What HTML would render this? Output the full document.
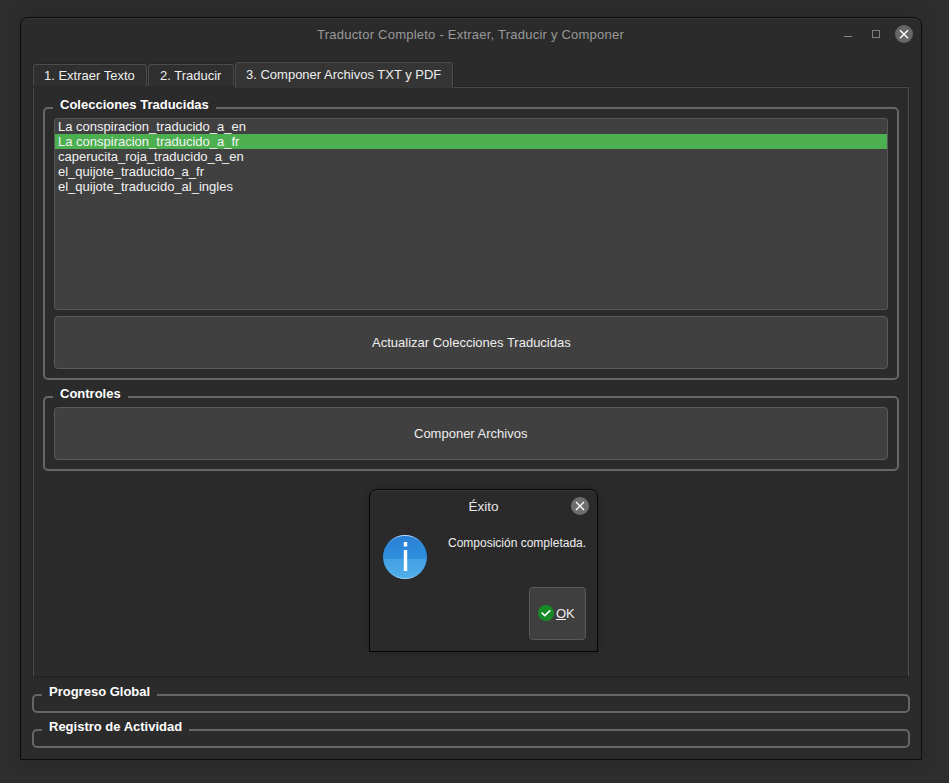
<!DOCTYPE html>
<html><head><meta charset="utf-8">
<style>
*{margin:0;padding:0;box-sizing:border-box}
html,body{width:949px;height:783px;overflow:hidden;background:#2d2d2d;font-family:"Liberation Sans",sans-serif;font-size:13px;color:#eeeeee}
.a{position:absolute}
.t{position:absolute;white-space:nowrap;line-height:13px}
#win{left:20px;top:17px;width:902px;height:743px;background:#2b2b2b;border:1px solid #0c0c0c;border-radius:8px 8px 0 0;box-shadow:inset 0 1px 0 #363636,0 0 14px rgba(0,0,0,0.12)}
.tab{position:absolute;background:#2f2f2f;border:1px solid #4c4c4c;border-bottom:none;border-radius:3px 3px 0 0;box-shadow:0 -1px 0 #262626,-1px 0 0 #262626,1px 0 0 #262626}
.tab.sel{background:#353535}
.grp{position:absolute;border:2px solid #666666;border-radius:5px}
.gt{position:absolute;white-space:nowrap;line-height:13px;font-weight:bold;color:#ffffff;background:#2b2b2b;padding:0 7px 0 7px}
.list{left:54px;top:118px;width:834px;height:192px;background:#404040;border:1px solid #585858;border-radius:3px}
.btn{position:absolute;background:#404040;border:1px solid #5a5a5a;border-radius:4px}
.item{position:absolute;left:58px;white-space:nowrap;line-height:13px;color:#f2f2f2}
</style></head><body>
<div class="a" id="win"></div>
<div class="t" style="left:317px;top:28px;color:#999999;letter-spacing:0.23px">Traductor Completo - Extraer, Traducir y Componer</div>
<!-- title buttons -->
<div class="a" style="left:844px;top:36px;width:8px;height:1px;background:#8a8a8a"></div>
<div class="a" style="left:872px;top:30px;width:8px;height:8px;border:1px solid #7d7d7d"></div>
<div class="a" style="left:895px;top:25px;width:18px;height:18px;border-radius:50%;background:#676767"></div>
<svg class="a" style="left:895px;top:25px" width="18" height="18"><path d="M5 5.3L13 13.3M13 5.3L5 13.3" stroke="#ffffff" stroke-width="1.4"/></svg>

<!-- tabs -->
<div class="a" style="left:32px;top:88px;width:878px;height:590px;border:1px solid #262626;border-top:none"></div>
<div class="a" style="left:33px;top:88px;width:876px;height:589px;border:1px solid #4c4c4c;border-top:none;border-bottom-color:#232323"></div>
<div class="a" style="left:453px;top:86px;width:457px;height:1px;background:#242424"></div>
<div class="a" style="left:453px;top:87px;width:456px;height:1px;background:#4a4a4a"></div>
<div class="tab" style="left:33px;top:64px;width:114px;height:22px"></div>
<div class="tab" style="left:148px;top:64px;width:86px;height:22px"></div>
<div class="tab sel" style="left:235px;top:62px;width:218px;height:26px"></div>
<div class="t" style="left:44px;top:69px">1. Extraer Texto</div>
<div class="t" style="left:160px;top:69px">2. Traducir</div>
<div class="t" style="left:246px;top:68px">3. Componer Archivos TXT y PDF</div>

<!-- group 1 -->
<div class="grp" style="left:43px;top:107px;width:856px;height:273px"></div>
<div class="gt" style="left:53px;top:98px">Colecciones Traducidas</div>
<div class="a list"></div>
<div class="a" style="left:55px;top:134px;width:832px;height:15px;background:#4caf50"></div>
<div class="item" style="top:120px">La conspiracion_traducido_a_en</div>
<div class="item" style="top:135px">La conspiracion_traducido_a_fr</div>
<div class="item" style="top:150px">caperucita_roja_traducido_a_en</div>
<div class="item" style="top:165px">el_quijote_traducido_a_fr</div>
<div class="item" style="top:180px">el_quijote_traducido_al_ingles</div>
<div class="btn" style="left:54px;top:316px;width:834px;height:53px"></div>
<div class="t" style="left:372px;top:336px">Actualizar Colecciones Traducidas</div>

<!-- group 2 -->
<div class="grp" style="left:43px;top:396px;width:856px;height:75px"></div>
<div class="gt" style="left:53px;top:387px">Controles</div>
<div class="btn" style="left:54px;top:407px;width:834px;height:53px"></div>
<div class="t" style="left:414px;top:427px">Componer Archivos</div>

<!-- bottom groups -->
<div class="grp" style="left:32px;top:694px;width:878px;height:19px"></div>
<div class="gt" style="left:42px;top:685px">Progreso Global</div>
<div class="grp" style="left:32px;top:729px;width:878px;height:19px"></div>
<div class="gt" style="left:42px;top:720px">Registro de Actividad</div>

<!-- dialog -->
<div class="a" style="left:369px;top:489px;width:229px;height:163px;background:#2a2a2a;border:1px solid #050505;border-radius:8px 8px 0 0;box-shadow:inset 0 1px 0 #383838,0 0 10px rgba(0,0,0,0.25)"></div>
<div class="t" style="left:468.5px;top:500px;font-size:13.5px;line-height:14px;color:#e6e6e6">Éxito</div>
<div class="a" style="left:571px;top:497px;width:18px;height:18px;border-radius:50%;background:#6e6e6e"></div>
<svg class="a" style="left:571px;top:497px" width="18" height="18"><path d="M5 5L13 13M13 5L5 13" stroke="#ffffff" stroke-width="1.4"/></svg>
<svg class="a" style="left:382px;top:534px" width="46" height="46" viewBox="0 0 46 46">
<defs><clipPath id="c"><circle cx="23" cy="23" r="22"/></clipPath>
<linearGradient id="g1" x1="0" y1="0" x2="0" y2="1"><stop offset="0" stop-color="#2a7fd5"/><stop offset="1" stop-color="#2f90dd"/></linearGradient>
<linearGradient id="g2" x1="0" y1="0" x2="0" y2="1"><stop offset="0" stop-color="#449fe2"/><stop offset="1" stop-color="#52b1ea"/></linearGradient>
<linearGradient id="rim" x1="0" y1="0" x2="0" y2="1"><stop offset="0" stop-color="#cfe6f8"/><stop offset="0.25" stop-color="#5aa8e8" stop-opacity="0"/><stop offset="0.75" stop-color="#5aa8e8" stop-opacity="0"/><stop offset="1" stop-color="#a8d8f6"/></linearGradient>
</defs>
<circle cx="23" cy="23" r="22.6" fill="#1d2b38"/>
<g clip-path="url(#c)"><rect x="0" y="0" width="46" height="25" fill="url(#g1)"/><rect x="0" y="25" width="46" height="21" fill="url(#g2)"/></g>
<circle cx="23" cy="23" r="21.6" fill="none" stroke="url(#rim)" stroke-width="0.9"/>
<rect x="21.8" y="8" width="3.4" height="4.5" fill="#ffffff"/>
<rect x="21.8" y="16" width="3.4" height="21" fill="#ffffff"/>
</svg>
<div class="t" style="left:448px;top:537px;font-size:12px;line-height:12px;color:#eeeeee">Composición completada.</div>
<div class="btn" style="left:529px;top:587px;width:57px;height:53px;background:#3f3f3f"></div>
<svg class="a" style="left:538px;top:605px" width="16" height="16"><circle cx="8" cy="8" r="8" fill="#168a26"/><path d="M3.6 7.7L6.8 10.6L12.3 5.4" stroke="#fff" stroke-width="1.6" fill="none"/></svg>
<div class="t" style="left:556px;top:607px;color:#f0f0f0">OK</div>
<div class="a" style="left:556px;top:619px;width:10px;height:1px;background:#f0f0f0"></div>
</body></html>
